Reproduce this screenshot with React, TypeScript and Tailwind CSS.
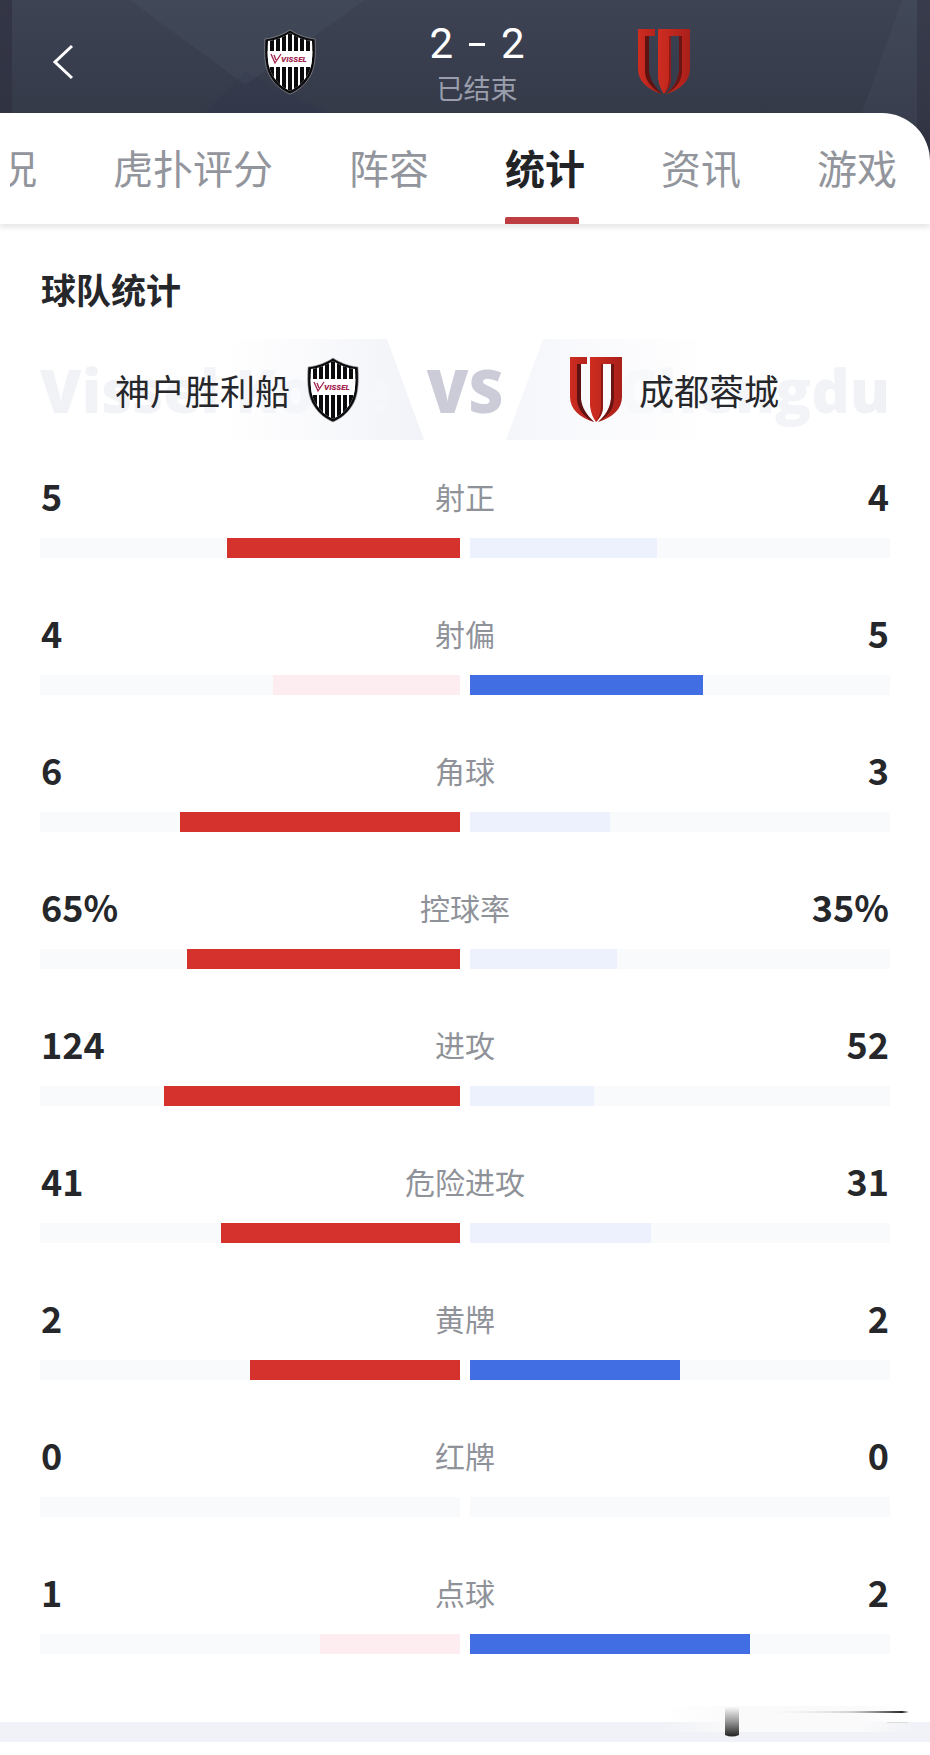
import { useState } from "react";

interface Stat {
  label: string;
  home: number;
  away: number;
  unit?: string;
}

const tabs = ["况", "虎扑评分", "阵容", "统计", "资讯", "游戏"];

const stats: Stat[] = [
  { label: "射正", home: 5, away: 4 },
  { label: "射偏", home: 4, away: 5 },
  { label: "角球", home: 6, away: 3 },
  { label: "控球率", home: 65, away: 35, unit: "%" },
  { label: "进攻", home: 124, away: 52 },
  { label: "危险进攻", home: 41, away: 31 },
  { label: "黄牌", home: 2, away: 2 },
  { label: "红牌", home: 0, away: 0 },
  { label: "点球", home: 1, away: 2 },
];

function VisselCrest() {
  return (
    <svg viewBox="0 0 52 66" className="h-[66px] w-[52px] shrink-0" role="img" aria-label="Vissel Kobe">
      <clipPath id="shield">
        <path d="M26 4 C32 8 40 11 48 12 C49 28 48 39 43 47 C38 55 32 59 26 62 C20 59 14 55 9 47 C4 39 3 28 4 12 C12 11 20 8 26 4 Z" />
      </clipPath>
      <path
        d="M26 1 C32 5 41 9 51 10 C52 28 51 40 45 49 C40 57 33 62 26 65 C19 62 12 57 7 49 C1 40 0 28 1 10 C11 9 20 5 26 1 Z"
        fill="#0b0b0d"
        stroke="#a9abb2"
        strokeWidth="0.6"
      />
      <g clipPath="url(#shield)">
        <rect width="52" height="66" fill="#fff" />
        {[6, 12, 18, 24, 30, 36, 42].map(x => (
          <rect key={x} x={x} width="4" height="66" fill="#0b0b0d" />
        ))}
        <rect y="22" width="52" height="16" fill="#fff" />
      </g>
      <path d="M7 25 L11 34 L17 25 M10 26 L12 31" fill="none" stroke="#a3244f" strokeWidth="1.3" />
      <text x="17" y="33" fontSize="8" fontWeight="900" fontStyle="italic" fill="#a3244f" fontFamily="Roboto, sans-serif">
        VISSEL
      </text>
    </svg>
  );
}

function ChengduCrest() {
  return (
    <svg viewBox="0 0 54 68" className="h-[68px] w-[54px] shrink-0" role="img" aria-label="Chengdu Rongcheng">
      <defs>
        <linearGradient id="red" x1="0" x2="1">
          <stop offset="0" stopColor="#cf2c20" />
          <stop offset="1" stopColor="#a9201a" />
        </linearGradient>
      </defs>
      <path d="M1 1 H18 V8 H11 V43 C12 52 17 59 25 66 C11 62 1 53 1 41 Z" fill="url(#red)" />
      <path d="M8 8 L12 8 V43 C13 52 18 59 25 66 C14 60 8 52 8 43 Z" fill="#5e1212" />
      <path d="M53 1 H21 V50 C22 57 24 62 27 66 C31 62 34 57 34 50 V8 H42 V43 C41 53 36 60 29 66 C43 62 53 53 53 41 Z" fill="url(#red)" />
      <path d="M42 8 L45 8 V43 C45 52 40 60 29 66 C36 60 41 53 42 43 Z" fill="#6b1414" />
      <path d="M32 8 H34 V50 C34 57 31 62 27 66 C30 61 32 56 32 50 Z" fill="#8d1a16" />
    </svg>
  );
}

function StatRow({ label, home, away, unit = "" }: Stat) {
  const total = home + away || 1;
  return (
    <li>
      <div className="grid h-11 grid-cols-[1fr_auto_1fr] items-center px-px text-[36px] leading-11 font-bold text-[#26272b]">
        <span>{home}{unit}</span>
        <span className="pt-[2px] text-[30px] font-normal text-[#8f9299]">{label}</span>
        <span className="text-right">{away}{unit}</span>
      </div>
      <div className="mt-[22px] flex h-5 gap-[10px]">
        <div className="flex flex-1 justify-end bg-[#f9fafc]">
          <div className={home >= away ? "bg-[#d5322d]" : "bg-[#fdedf0]"} style={{ width: `${(home / total) * 100}%` }} />
        </div>
        <div className="flex flex-1 bg-[#f9fafc]">
          <div className={away >= home ? "bg-[#416ee2]" : "bg-[#edf0fd]"} style={{ width: `${(away / total) * 100}%` }} />
        </div>
      </div>
    </li>
  );
}

export default function MatchStats() {
  const [active, setActive] = useState("统计");

  return (
    <div className="w-full overflow-hidden bg-white font-['Noto_Sans_CJK_SC',sans-serif] text-[#26272b]">
      <div className="relative bg-[#2d323c]">
        <svg className="absolute inset-x-0 top-0 h-[162px] w-full" viewBox="0 0 930 162" preserveAspectRatio="none" aria-hidden="true">
          <defs>
            <linearGradient id="sky" x1="0" x2="0" y1="0" y2="1">
              <stop offset="0" stopColor="#3d4353" />
              <stop offset="0.7" stopColor="#353a49" />
              <stop offset="1" stopColor="#2d323c" />
            </linearGradient>
          </defs>
          <rect width="930" height="162" fill="url(#sky)" />
          <path d="M130 0 H365 L245 85 Z" fill="#7f9aa8" opacity="0.07" />
          <path d="M245 72 L330 113 H205 Z" fill="#22304a" opacity="0.12" />
          <path d="M902 0 L917 0 V150 L862 113 Z" fill="#8a9aa8" opacity="0.06" />
          <rect width="12" height="162" fill="#2f3140" opacity="0.7" />
          <rect x="917" width="13" height="162" fill="#2f3340" opacity="0.4" />
        </svg>
        <header className="relative grid h-[113px] grid-cols-[1fr_auto_1fr] items-center pt-[11px] pr-[6px] pl-[30px]">
          <div className="flex items-center justify-between pr-[113px]">
            <button aria-label="返回" className="p-5">
              <svg viewBox="0 0 24 36" className="h-9 w-6" fill="none" stroke="#fff" strokeWidth="3">
                <path d="M22 2 L5 18 L22 34" />
              </svg>
            </button>
            <VisselCrest />
          </div>
          <div className="flex flex-col items-center">
            <div className="flex h-12 items-center gap-4 font-[Roboto,sans-serif] text-[42px] leading-12 text-white">
              <span>2</span>
              <span className="h-[3px] w-4 bg-white" />
              <span>2</span>
            </div>
            <span className="h-9 pt-[2px] text-[27px] leading-9 text-[#9a9eac]">已结束</span>
          </div>
          <div className="pl-[112px]">
            <ChengduCrest />
          </div>
        </header>
        <div className="relative rounded-tr-[48px] bg-white shadow-[0_4px_5px_rgba(0,0,0,0.09)]">
          <nav className="ml-[10px] flex h-[111px] justify-end gap-[76px] overflow-hidden pr-[33px] text-[40px] whitespace-nowrap">
            {tabs.map(tab => (
              <button
                key={tab}
                onClick={() => setActive(tab)}
                className={`flex shrink-0 flex-col items-start justify-between ${active === tab ? "font-bold text-[#222326]" : "text-[#92959c]"}`}
              >
                <span className="pt-6 leading-[60px]">{tab}</span>
                {active === tab && <span className="h-[7px] w-[74px] rounded-t-[2px] bg-[#bd3d40]" />}
              </button>
            ))}
          </nav>
        </div>
      </div>

      <main className="px-10 pt-[43px] pb-[68px]">
        <h1 className="px-px text-[35px] leading-11 font-bold">球队统计</h1>

        <section className="relative mt-7 grid h-[101px] grid-cols-[1fr_156px_1fr] items-center text-[35px] leading-11">
          <svg className="absolute inset-0 h-full w-full" viewBox="0 0 850 101" preserveAspectRatio="none" aria-hidden="true">
            <defs>
              <linearGradient id="fadeLeft" x1="0" x2="1">
                <stop offset="0.3" stopColor="#fff" />
                <stop offset="1" stopColor="#f2f3f8" />
              </linearGradient>
              <linearGradient id="fadeRight" x1="0" x2="1">
                <stop offset="0" stopColor="#f5f6fa" />
                <stop offset="0.7" stopColor="#fff" />
              </linearGradient>
            </defs>
            <path d="M100 0 H347 L384 101 H100 Z" fill="url(#fadeLeft)" />
            <path d="M503 0 H760 V101 H466 Z" fill="url(#fadeRight)" />
          </svg>
          <div className="absolute inset-0 flex items-center justify-between font-['Open_Sans',sans-serif] text-[60px] font-extrabold" aria-hidden="true">
            <span className="bg-linear-to-r from-[#f1f2f5] to-[#f6f7fa] bg-clip-text leading-20 text-transparent">Vissel Kobe</span>
            <span className="bg-linear-to-r from-[#f8f9fb] to-[#f0f1f5] bg-clip-text leading-20 text-transparent">Chengdu</span>
          </div>
          <div className="relative flex items-center justify-end gap-[17px] pr-7">
            <span>神户胜利船</span>
            <VisselCrest />
          </div>
          <span className="relative text-center font-['Open_Sans',sans-serif] text-[60px] font-extrabold text-[#cbccd8]">VS</span>
          <div className="relative flex items-center gap-4 pl-[26px]">
            <ChengduCrest />
            <span>成都蓉城</span>
          </div>
        </section>

        <ul className="mt-8 flex flex-col gap-[51px]">
          {stats.map(stat => (
            <StatRow key={stat.label} {...stat} />
          ))}
        </ul>
      </main>

      <footer className="relative mb-3 h-5 bg-[#f1f2f7]">
        <svg className="absolute right-[18px] bottom-1 h-9 w-[250px]" viewBox="0 0 250 36" aria-hidden="true">
          <defs>
            <linearGradient id="smudge" x1="0" x2="0" y1="0" y2="1">
              <stop offset="0" stopColor="#fff" />
              <stop offset="0.5" stopColor="#9a9a9a" />
              <stop offset="1" stopColor="#222" />
            </linearGradient>
            <linearGradient id="streak" x1="0" x2="1">
              <stop offset="0" stopColor="#f4f4f4" />
              <stop offset="0.6" stopColor="#bbb" />
              <stop offset="1" stopColor="#111" />
            </linearGradient>
            <linearGradient id="haze" x1="0" x2="1">
              <stop offset="0" stopColor="#fafafb" stopOpacity="0" />
              <stop offset="0.3" stopColor="#fafafb" />
              <stop offset="0.8" stopColor="#fafafb" />
              <stop offset="1" stopColor="#fafafb" stopOpacity="0" />
            </linearGradient>
          </defs>
          <rect y="4" width="250" height="26" fill="url(#haze)" />
          <path d="M63 4 H77 V33 Q70 36 63 33 Z" fill="url(#smudge)" />
          <path d="M100 10 L240 9 L247 10 L240 11 Z" fill="url(#streak)" />
          <path d="M225 20 H246 V21 H225 Z" fill="#ddd" />
        </svg>
      </footer>
    </div>
  );
}
